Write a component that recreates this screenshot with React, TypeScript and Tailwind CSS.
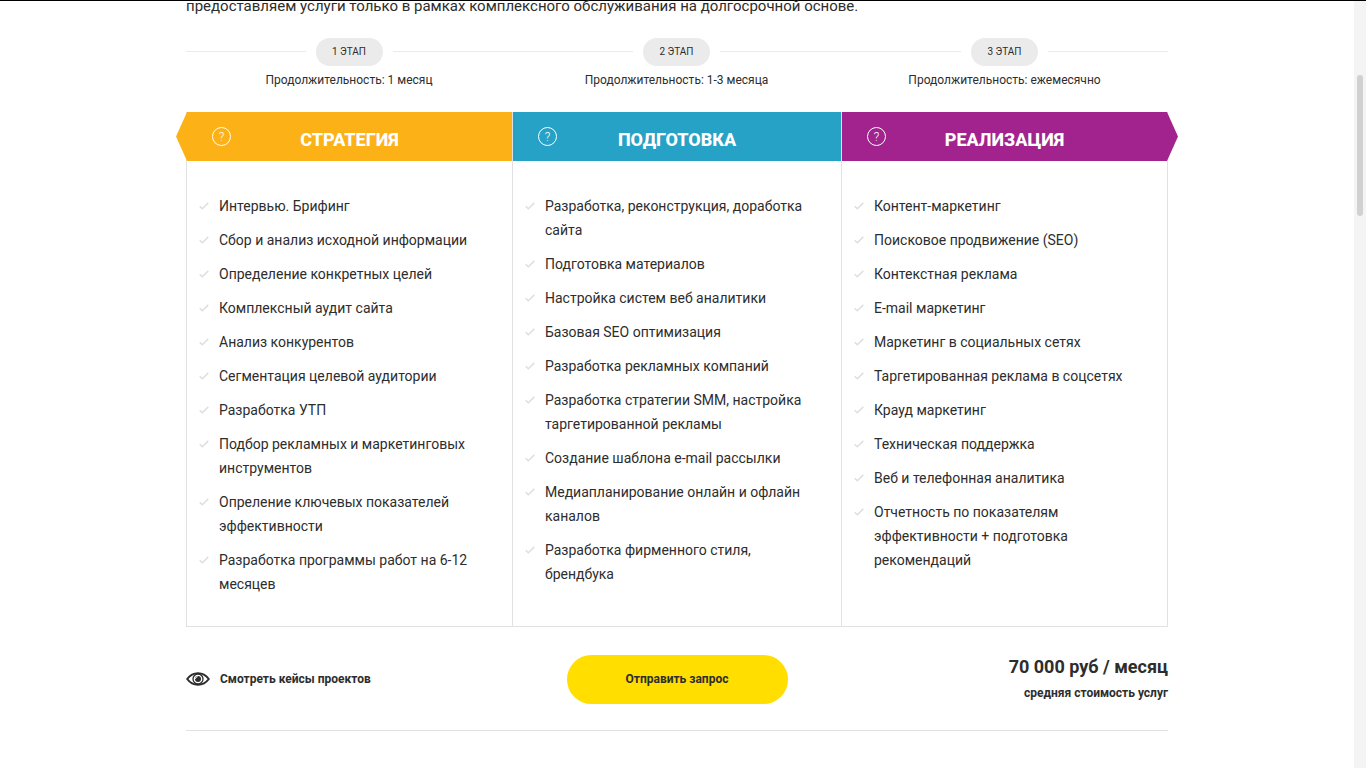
type Stage = {
  label: string;
  duration: string;
  title: string;
  color: string;
  side?: "left" | "right";
  items: string[];
};

const stages: Stage[] = [
  {
    label: "1 ЭТАП",
    duration: "Продолжительность: 1 месяц",
    title: "СТРАТЕГИЯ",
    color: "bg-[#fcb216]",
    side: "left",
    items: [
      "Интервью. Брифинг",
      "Сбор и анализ исходной информации",
      "Определение конкретных целей",
      "Комплексный аудит сайта",
      "Анализ конкурентов",
      "Сегментация целевой аудитории",
      "Разработка УТП",
      "Подбор рекламных и маркетинговых инструментов",
      "Опреление ключевых показателей эффективности",
      "Разработка программы работ на 6-12 месяцев",
    ],
  },
  {
    label: "2 ЭТАП",
    duration: "Продолжительность: 1-3 месяца",
    title: "ПОДГОТОВКА",
    color: "bg-[#27a2c7]",
    items: [
      "Разработка, реконструкция, доработка сайта",
      "Подготовка материалов",
      "Настройка систем веб аналитики",
      "Базовая SEO оптимизация",
      "Разработка рекламных компаний",
      "Разработка стратегии SMM, настройка таргетированной рекламы",
      "Создание шаблона e-mail рассылки",
      "Медиапланирование онлайн и офлайн каналов",
      "Разработка фирменного стиля, брендбука",
    ],
  },
  {
    label: "3 ЭТАП",
    duration: "Продолжительность: ежемесячно",
    title: "РЕАЛИЗАЦИЯ",
    color: "bg-[#a2238e]",
    side: "right",
    items: [
      "Контент-маркетинг",
      "Поисковое продвижение (SEO)",
      "Контекстная реклама",
      "E-mail маркетинг",
      "Маркетинг в социальных сетях",
      "Таргетированная реклама в соцсетях",
      "Крауд маркетинг",
      "Техническая поддержка",
      "Веб и телефонная аналитика",
      "Отчетность по показателям эффективности + подготовка рекомендаций",
    ],
  },
];

function Check() {
  return (
    <svg className="mt-2 h-2 w-[10px] shrink-0" viewBox="0 0 10 8" fill="none" aria-hidden="true">
      <path d="M0.7 4.2 L3.3 6.7 L9.3 0.9" stroke="#dedede" strokeWidth="1.5" />
    </svg>
  );
}

function Eye() {
  return (
    <svg className="h-[14px] w-6 shrink-0" viewBox="0 0 24 14" fill="none" aria-hidden="true">
      <path d="M1.2 7C4 3.2 7.600 1.200 12 1.200S20 3.200 22.800 7C20 10.800 16.400 12.800 12 12.800S4 10.800 1.200 7Z" stroke="#2d2d2d" strokeWidth="2" />
      <circle cx="12" cy="7" r="5" stroke="#2d2d2d" strokeWidth="1.300" />
      <circle cx="12" cy="7" r="3" fill="#2d2d2d" />
      <path d="M9.400 6.800A2.600 2.600 0 0 1 11.600 4.600" stroke="#fff" strokeWidth="1" />
    </svg>
  );
}

function StageMark({ stage }: { stage: Stage }) {
  return (
    <div className="text-center">
      <div className="flex items-center gap-[10px]">
        <span className="h-[2px] flex-1 border-t border-[#ebebeb]" />
        <span className="h-7 w-[67px] rounded-full bg-[#ebebeb] text-[10px] leading-7">{stage.label}</span>
        <span className="h-[2px] flex-1 border-t border-[#ebebeb]" />
      </div>
      <p className="mt-1 text-xs leading-5">{stage.duration}</p>
    </div>
  );
}

function StageColumn({ stage }: { stage: Stage }) {
  return (
    <section className="border-b border-l border-[#e1e1e1] last:border-r">
      <header className={`relative flex h-[49px] items-center justify-center ${stage.color}`}>
        {stage.side === "left" && (
          <span className={`absolute top-0 right-full h-full w-[11px] ${stage.color} [clip-path:polygon(100%_0,0_50%,100%_100%)]`} />
        )}
        {stage.side === "right" && (
          <span className={`absolute top-0 left-full h-full w-[11px] ${stage.color} [clip-path:polygon(0_0,100%_50%,0_100%)]`} />
        )}
        <button
          type="button"
          aria-label={`Подробнее: ${stage.title}`}
          className="absolute top-[15px] left-[25px] size-[19px] rounded-full border border-white text-center text-xs leading-[18px] font-light text-white"
        >
          ?
        </button>
        <h2 className="pt-[6px] text-lg font-extrabold text-white">{stage.title}</h2>
      </header>
      <ul className="flex flex-col gap-[10px] pt-[33px] pr-[30px] pb-[30px] pl-3 text-sm leading-6">
        {stage.items.map((item) => (
          <li key={item} className="flex gap-[10px]">
            <Check />
            <span>{item}</span>
          </li>
        ))}
      </ul>
    </section>
  );
}

export default function App() {
  return (
    <div className="flex min-h-screen border-t border-black bg-white font-['Roboto',sans-serif] text-[#2d2d2d]">
      <main className="min-w-0 flex-1">
        <div className="mx-auto max-w-[982px]">
          <div className="flex h-[37px] items-start">
            <p className="-mt-2 text-[15px] leading-[26px]">
              предоставляем услуги только в рамках комплексного обслуживания на долгосрочной основе.
            </p>
          </div>
          <div className="grid grid-cols-[326fr_329fr_327fr]">
            {stages.map((stage) => (
              <StageMark key={stage.label} stage={stage} />
            ))}
          </div>
          <div className="mt-[22px] grid grid-cols-[326fr_329fr_327fr]">
            {stages.map((stage) => (
              <StageColumn key={stage.title} stage={stage} />
            ))}
          </div>
          <div className="grid grid-cols-[1fr_auto_1fr] items-center border-b border-[#e1e1e1] pt-[26px] pb-[25px]">
            <a href="#cases" className="flex items-center gap-[10px] text-xs font-bold">
              <Eye />
              Смотреть кейсы проектов
            </a>
            <button type="button" className="h-[49px] w-[221px] rounded-full bg-[#ffde00] text-xs font-bold">
              Отправить запрос
            </button>
            <div className="text-right font-bold">
              <p className="text-lg leading-7">70 000 руб / месяц</p>
              <p className="text-xs leading-6">средняя стоимость услуг</p>
            </div>
          </div>
        </div>
      </main>
      <div className="w-3 shrink-0 bg-[#f4f4f4] pt-[74px]" aria-hidden="true">
        <div className="ml-[3px] h-[141px] w-[6px] rounded-full bg-[#d1d1d1]" />
      </div>
    </div>
  );
}
